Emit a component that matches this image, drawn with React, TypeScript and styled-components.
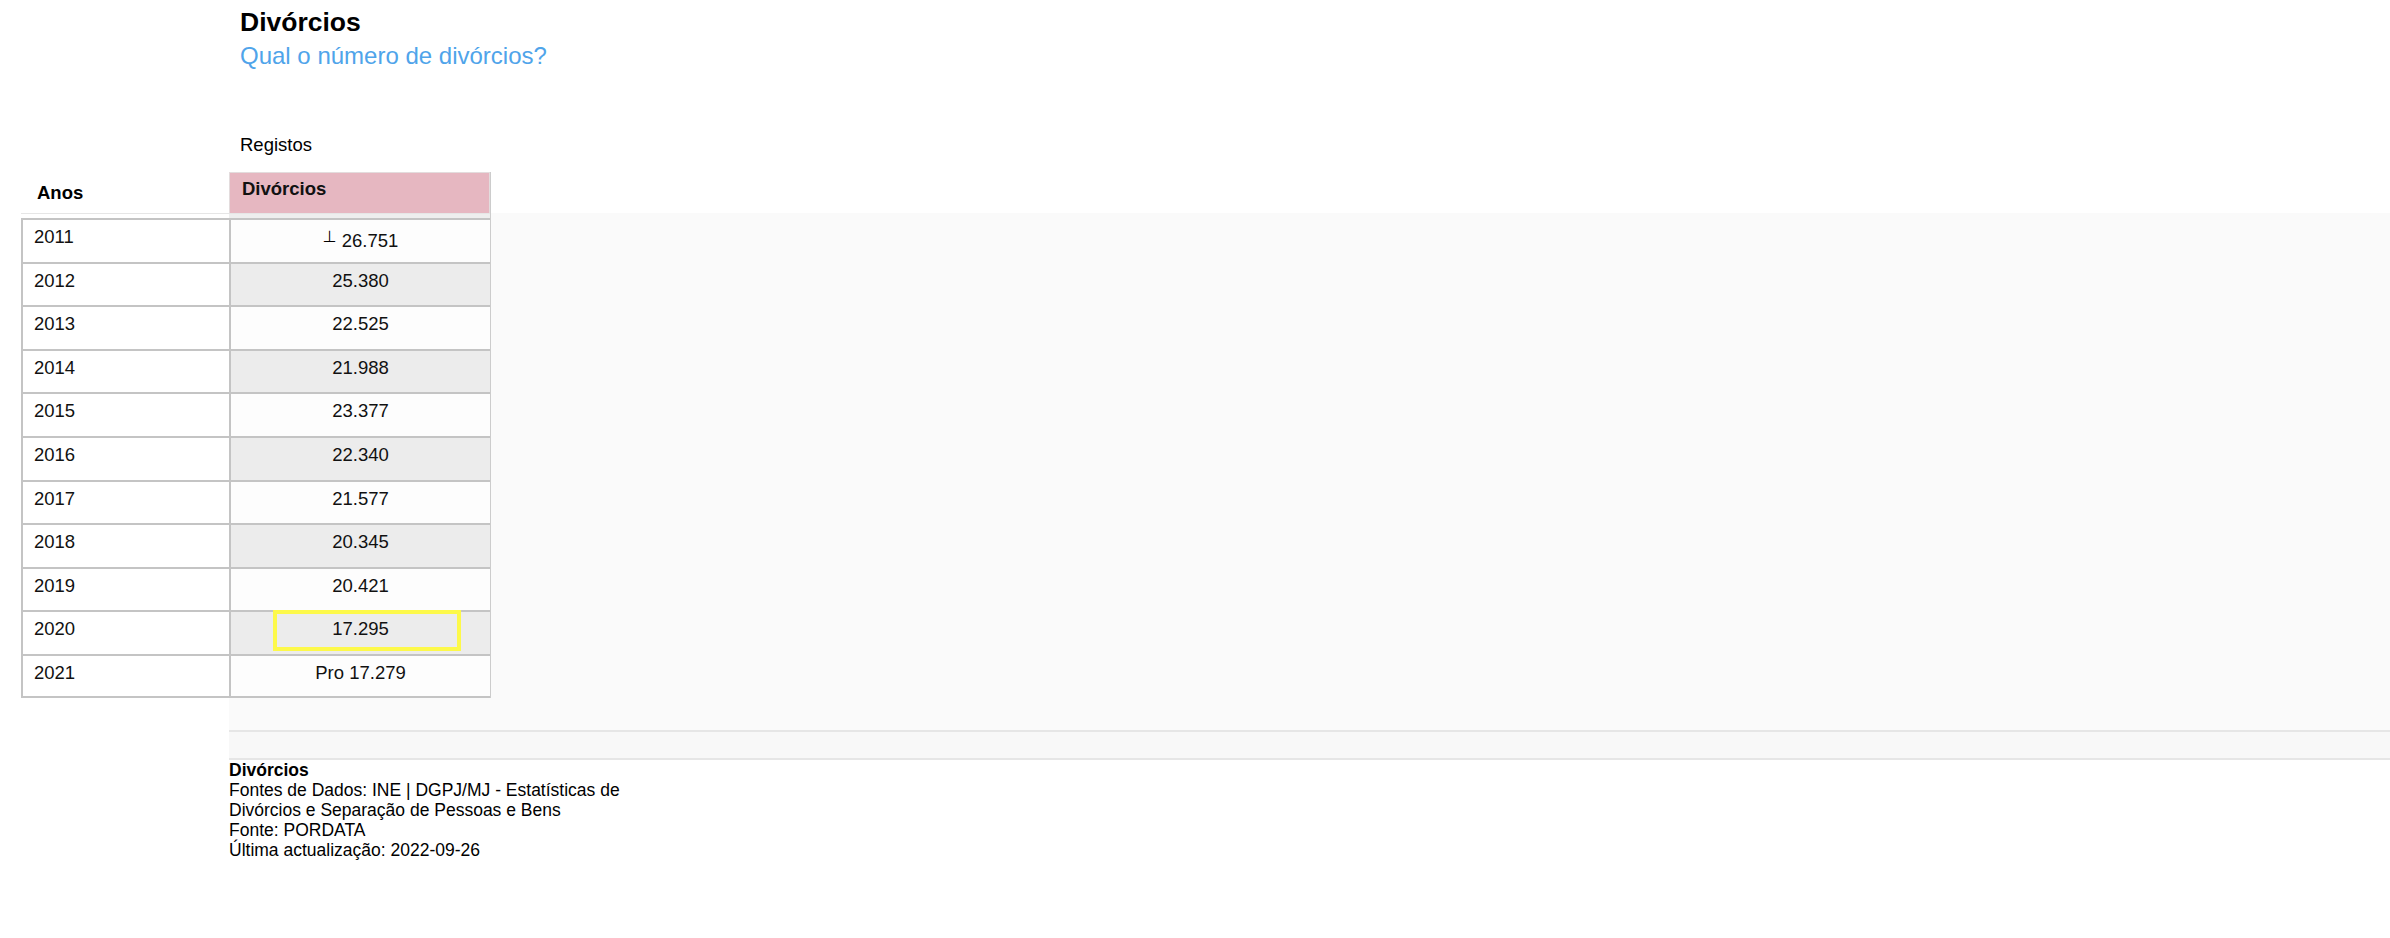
import React from "react";
import styled, { createGlobalStyle } from "styled-components";

const GlobalStyle = createGlobalStyle`
  html, body {
    margin: 0;
    padding: 0;
    background: #ffffff;
  }
  body {
    font-family: "Liberation Sans", Arial, Helvetica, sans-serif;
    color: #111;
  }
`;

type SeriesRow = {
  year: number;
  value: string;
  prefix?: string;
  flag?: string;
  highlight?: boolean;
};

const rows: SeriesRow[] = [
  { year: 2011, value: "26.751", flag: "⊥" },
  { year: 2012, value: "25.380" },
  { year: 2013, value: "22.525" },
  { year: 2014, value: "21.988" },
  { year: 2015, value: "23.377" },
  { year: 2016, value: "22.340" },
  { year: 2017, value: "21.577" },
  { year: 2018, value: "20.345" },
  { year: 2019, value: "20.421" },
  { year: 2020, value: "17.295", highlight: true },
  { year: 2021, value: "17.279", prefix: "Pro" },
];

const Page = styled.div`
  width: 100%;
  padding-top: 7px;
`;

const Header = styled.header`
  padding-left: 240px;
`;

const Title = styled.h1`
  margin: 0;
  font-size: 26.5px;
  line-height: 30px;
  font-weight: 700;
  color: #000;
`;

const Question = styled.h2`
  margin: 5px 0 0;
  font-size: 24px;
  line-height: 28px;
  font-weight: 400;
  color: #4fa4ea;
`;

const Unit = styled.div`
  margin-top: 64px;
  font-size: 18.5px;
  line-height: 21px;
  color: #000;
`;

const DataArea = styled.section`
  display: flex;
  margin-top: 17px;
  height: 558px;
`;

const YearColumn = styled.div`
  margin-left: 21px;
  width: 208px;
  display: flex;
  flex-direction: column;
`;

const ColHead = styled.div`
  height: 41px;
  padding-left: 16px;
  font-size: 18.5px;
  line-height: 41px;
  font-weight: 700;
  color: #000;
`;

const HeadRule = styled.div<{ $shade?: boolean }>`
  height: 5px;
  box-sizing: border-box;
  border-top: 1px solid #e6e6e6;
  background: ${(p) => (p.$shade ? "#eeeeee" : "#ffffff")};
`;

const Cell = styled.div<{ $shade?: boolean; $center?: boolean; $last?: boolean }>`
  position: relative;
  box-sizing: border-box;
  height: 43.6px;
  padding: 5px 11px 0;
  border-top: 2px solid #c4c4c4;
  border-left: 2px solid #c4c4c4;
  border-bottom: ${(p) => (p.$last ? "2px solid #c4c4c4" : "none")};
  background: ${(p) => (p.$shade ? "#ececec" : "#fdfdfd")};
  font-size: 18.5px;
  line-height: 24px;
  text-align: ${(p) => (p.$center ? "center" : "left")};
  color: #111;
`;

const YearCell = styled(Cell)`
  background: #ffffff;
`;

const ValuePane = styled.div`
  flex: 1;
  background: linear-gradient(to bottom, #ffffff 41px, #fafafa 41px);
`;

const ValueColumn = styled.div`
  width: 262px;
  display: flex;
  flex-direction: column;
  border-right: 1px solid #cccccc;
  box-sizing: border-box;
`;

const ValueHead = styled.div`
  height: 41px;
  box-sizing: border-box;
  padding: 4px 12px 0;
  background: #e6b7c1;
  border: 1px solid #e3dcdd;
  border-bottom: none;
  font-size: 18.5px;
  line-height: 24px;
  font-weight: 700;
  color: #111;
`;

const Flag = styled.span`
  font-family: "DejaVu Sans", sans-serif;
  font-size: 16px;
  color: #000;
  vertical-align: 5px;
  margin-right: 5px;
`;

const Highlight = styled.span`
  position: absolute;
  left: 42px;
  top: -2px;
  width: 188px;
  height: 41px;
  box-sizing: border-box;
  border: 4px solid #fdf94a;
  pointer-events: none;
`;

const BottomBand = styled.div`
  margin-left: 229px;
  height: 30px;
  box-sizing: border-box;
  border-top: 2px solid #e6e6e6;
  border-bottom: 2px solid #e6e6e6;
  background: #f8f8f8;
`;

const Footer = styled.footer`
  margin-left: 229px;
  width: 420px;
  font-size: 17.5px;
  line-height: 20px;
  color: #000;
`;

const FooterTitle = styled.div`
  font-weight: 700;
`;

const App = () => {
  return (
    <Page>
      <GlobalStyle />
      <Header>
        <Title>Divórcios</Title>
        <Question>Qual o número de divórcios?</Question>
        <Unit>Registos</Unit>
      </Header>

      <DataArea>
        <YearColumn>
          <ColHead>Anos</ColHead>
          <HeadRule />
          {rows.map((row, i) => (
            <YearCell key={row.year} $last={i === rows.length - 1}>
              {row.year}
            </YearCell>
          ))}
        </YearColumn>

        <ValuePane>
          <ValueColumn>
            <ValueHead>Divórcios</ValueHead>
            <HeadRule $shade />
            {rows.map((row, i) => (
              <Cell
                key={row.year}
                $center
                $shade={i % 2 === 1}
                $last={i === rows.length - 1}
              >
                {row.flag && <Flag>{row.flag}</Flag>}
                {row.prefix && `${row.prefix} `}
                {row.value}
                {row.highlight && <Highlight />}
              </Cell>
            ))}
          </ValueColumn>
        </ValuePane>
      </DataArea>

      <BottomBand />

      <Footer>
        <FooterTitle>Divórcios</FooterTitle>
        <div>
          Fontes de Dados: INE | DGPJ/MJ - Estatísticas de Divórcios e
          Separação de Pessoas e Bens
        </div>
        <div>Fonte: PORDATA</div>
        <div>Última actualização: 2022-09-26</div>
      </Footer>
    </Page>
  );
};

export default App;
